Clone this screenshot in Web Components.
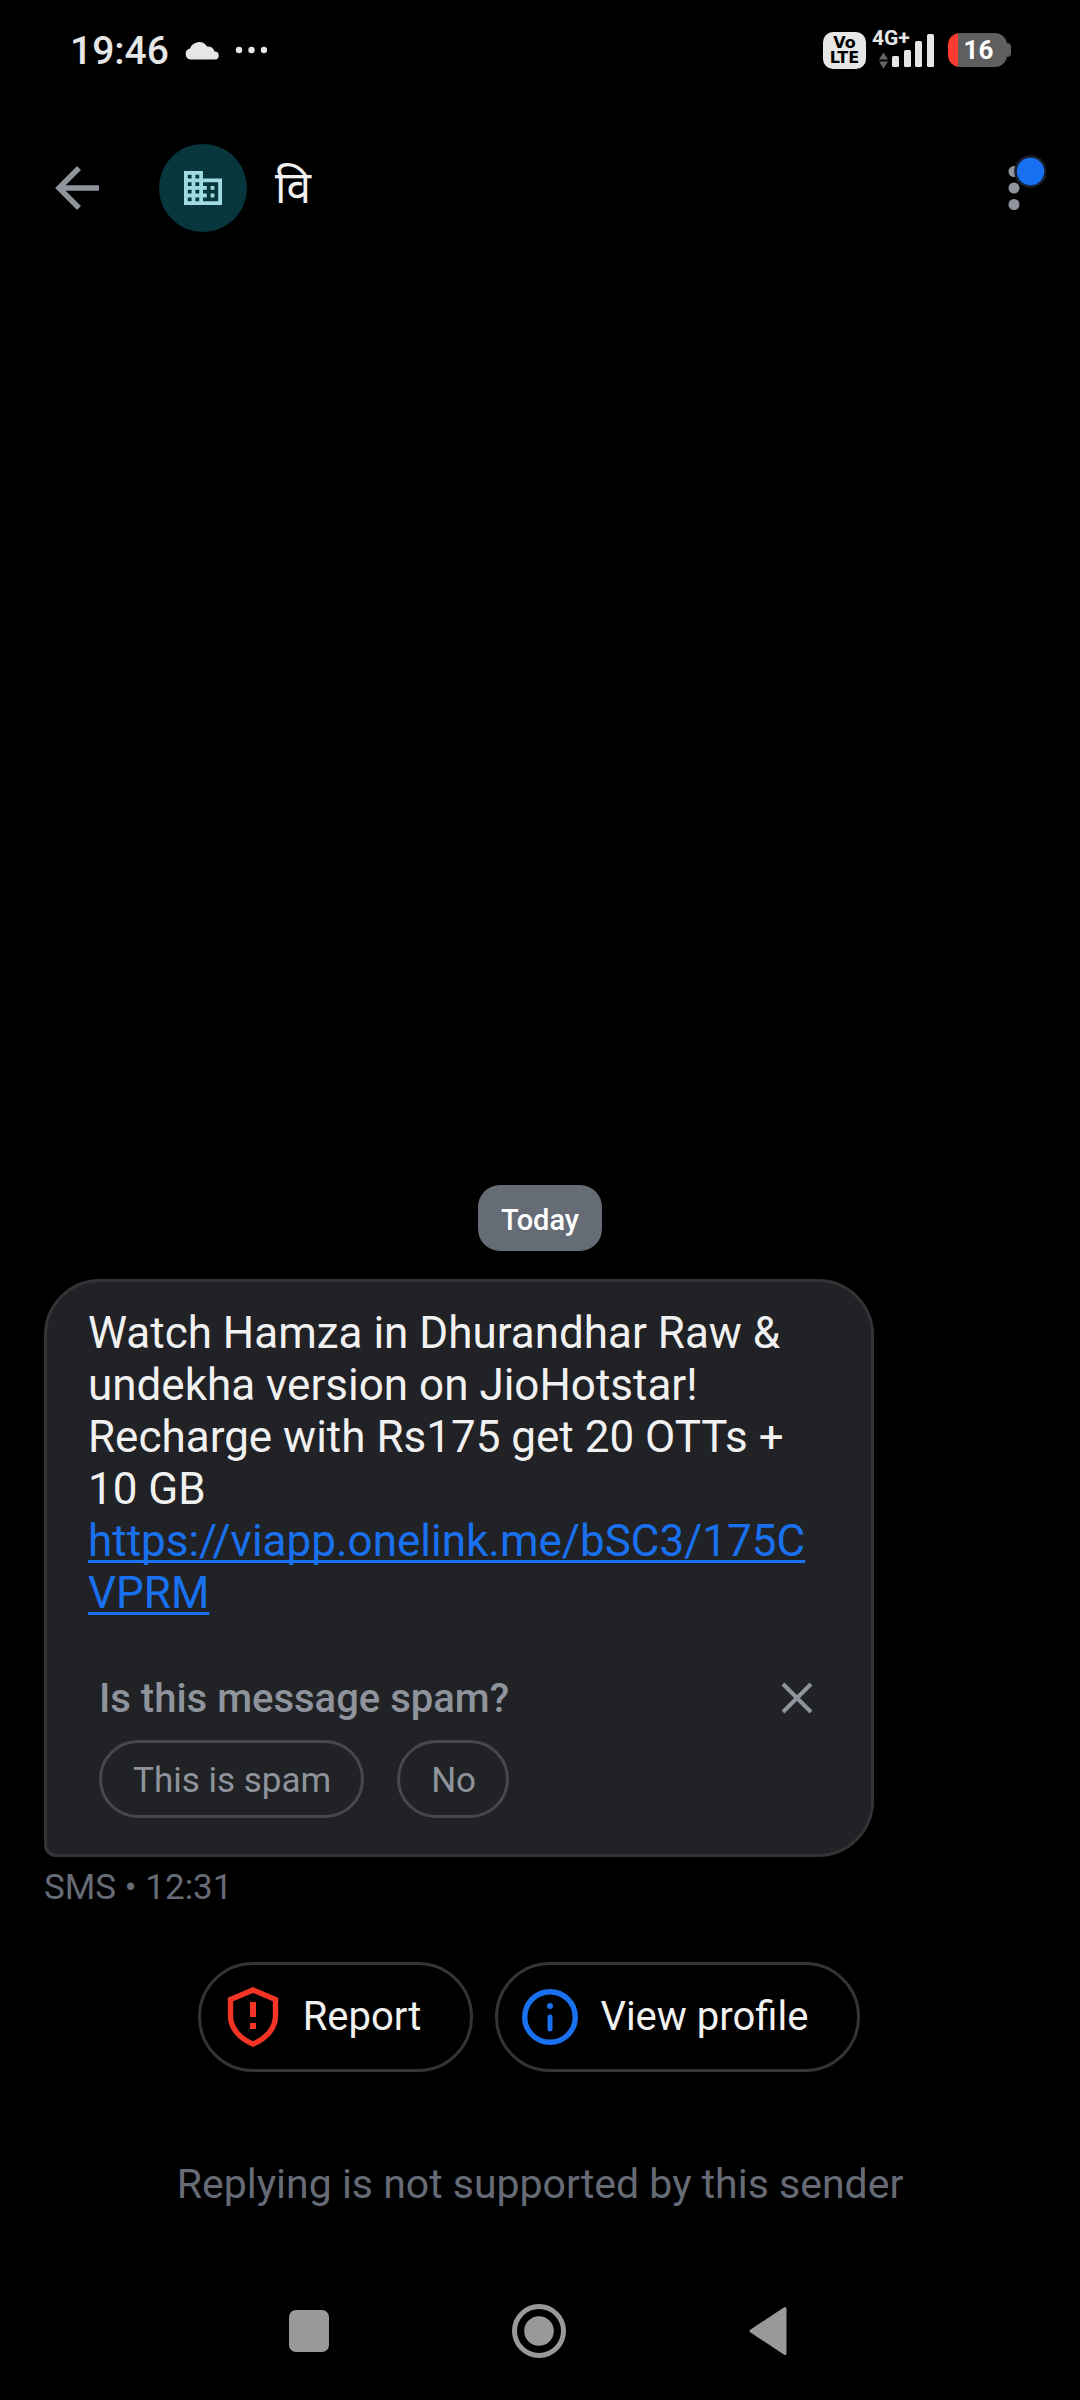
<!DOCTYPE html>
<html lang="en">
<head>
<meta charset="utf-8">
<meta name="viewport" content="width=device-width, initial-scale=1">
<title>Messages</title>
<style>
  html { background: #000; }
  body { margin: 0; background: #000; color: #f1f1f1; font-family: Roboto, "Noto Sans", "Noto Sans Devanagari", sans-serif; }
</style>
</head>
<body>
<messages-screen></messages-screen>

<script>
const reset = `
  * { box-sizing: border-box; }
  svg { display: block; flex: none; }
  button { margin: 0; padding: 0; border: 0; background: none; color: inherit; font: inherit; cursor: pointer; }
`;

function define(name, css, html) {
  const template = document.createElement('template');
  template.innerHTML = `<style>${reset}${css}</style>${html}`;
  customElements.define(name, class extends HTMLElement {
    constructor() {
      super();
      this.attachShadow({ mode: 'open' }).append(template.content.cloneNode(true));
    }
  });
}

/* Clock, notifications, network and battery */
define('status-bar', `
  :host { display: flex; align-items: center; justify-content: space-between; height: 100px; padding: 0 69px 0 70px; color: #e6e6e6; }
  .left, .right { display: flex; align-items: center; }
  .left { gap: 16px; }
  .right { gap: 6px; }
  time { padding-top: 2px; font-size: 39px; line-height: 48px; font-weight: 500; }
  .volte { display: flex; flex-direction: column; justify-content: center; align-items: center; width: 43px; height: 37px; border-radius: 10px; background: #e6e6e6; color: #000; font-family: "DejaVu Sans", sans-serif; font-size: 16px; line-height: 15px; font-weight: 700; }
  .network { display: grid; width: 64px; height: 48px; }
  .network > * { grid-area: 1 / 1; }
  .network span { font-size: 21px; line-height: 24px; font-weight: 700; }
  .battery { display: flex; align-items: center; margin-left: 6px; }
  .cell { display: flex; align-items: center; justify-content: center; width: 59px; height: 34px; padding-left: 2px; border-radius: 12px; background: linear-gradient(90deg, #ff3b30 10px, #5f5f5f 10px); color: #fff; font-size: 26px; line-height: 34px; font-weight: 700; }
  .nub { width: 4px; height: 14px; border-radius: 0 4px 4px 0; background: #5f5f5f; }
`, `
  <div class="left">
    <time>19:46</time>
    <svg width="34" height="20" viewBox="0 0 34 20" fill="#e6e6e6"><path d="M5.500 19.500A5.600 5.600 0 0 1 5 8.500A9.500 9.500 0 0 1 22 6.500 6.500 6.500 0 0 1 29.500 11.500 4 4 0 0 1 30 19.500Z"/></svg>
    <svg width="32" height="8" viewBox="0 0 32 8" fill="#e6e6e6"><circle cx="4" cy="4" r="3.200"/><circle cx="16.500" cy="4" r="3.200"/><circle cx="29" cy="4" r="3.200"/></svg>
  </div>
  <div class="right">
    <div class="volte"><span>Vo</span><span>LTE</span></div>
    <div class="network">
      <svg width="64" height="48" viewBox="0 0 64 48"><g fill="#e6e6e6"><rect x="20" y="30" width="7" height="11" rx="1.500"/><rect x="32" y="24" width="7" height="17" rx="1.500"/><rect x="43" y="15" width="7" height="26" rx="1.500"/><rect x="55" y="8" width="7" height="33" rx="1.500"/></g><path fill="#666" d="M7 33.500 11.500 26.500 16 33.500ZM7 35.500H16L11.500 42.500Z"/></svg>
      <span>4G+</span>
    </div>
    <div class="battery"><div class="cell">16</div><div class="nub"></div></div>
  </div>
`);

define('chat-header', `
  :host { display: flex; align-items: center; height: 175px; padding: 0 34px 0 55px; }
  .avatar { display: grid; place-items: center; width: 88px; height: 88px; margin: 0 28px 0 60px; border-radius: 50%; background: #07363c; }
  h1 { flex: 1; margin: 0; font-size: 44px; line-height: 56px; font-weight: 400; }
`, `
  <button aria-label="Back"><svg width="44" height="44" viewBox="0 0 44 44" fill="none" stroke="#8f949c" stroke-width="5.500"><path d="M44 22H4M24 2 4 22 24 42"/></svg></button>
  <div class="avatar"><svg width="38" height="34" viewBox="0 0 38 34"><path fill="#a0dbe2" fill-rule="evenodd" d="M0 0H19V7.500H38V34H0ZM3.800 3.800V7.500H7.600V3.800ZM11.400 3.800V7.500H15.200V3.800ZM3.800 11.300V15H7.600V11.300ZM11.400 11.300V15H15.200V11.300ZM3.800 18.800V22.500H7.600V18.800ZM11.400 18.800V22.500H15.200V18.800ZM3.800 26.400V30.200H7.600V26.400ZM11.400 26.400V30.200H15.200V26.400ZM19 11.300V15H22.800V18.800H19V22.500H22.800V26.400H19V30.200H34.200V11.300Z"/><path fill="#a0dbe2" d="M26.600 15H30.400V18.800H26.600ZM26.600 22.500H30.400V26.400H26.600Z"/></svg></div>
  <h1 lang="hi">वि</h1>
  <button aria-label="More options"><svg width="38" height="66" viewBox="0 0 38 66"><g fill="#8f949c"><circle cx="6" cy="16.500" r="5.500"/><circle cx="6" cy="33" r="5.500"/><circle cx="6" cy="49.500" r="5.500"/></g><circle cx="22.500" cy="16.500" r="15" fill="#1770f2" stroke="#17202c" stroke-width="2.600"/></svg></button>
`);

define('date-chip', `
  :host { display: block; align-self: center; min-width: 124px; padding: 4px 22px 0; border-radius: 22px; background: #666c76; color: #fff; font-size: 29px; line-height: 62px; font-weight: 500; text-align: center; }
`, `<slot></slot>`);

define('message-bubble', `
  :host { display: block; margin: 28px 206px 0 44px; border: 3px solid #333436; border-radius: 56px 56px 56px 12px; background: #212226; padding: 25px 41px 36px; }
  .text { margin: 0; font-size: 44px; line-height: 52px; overflow-wrap: anywhere; }
`, `<p class="text"><slot></slot></p><slot name="prompt"></slot>`);

define('spam-prompt', `
  :host { display: block; margin-top: 49px; padding: 0 17px 0 11px; color: #8f949c; }
  .row, .actions { display: flex; align-items: center; }
  .row { justify-content: space-between; height: 60px; }
  h2 { margin: 0; padding-top: 2px; font-size: 40px; line-height: 48px; font-weight: 500; }
  .actions { gap: 33px; margin-top: 12px; }
  .actions button { height: 78px; padding: 3px 30px 0 31px; border: 3px solid #47484c; border-radius: 39px; font-size: 35px; line-height: 40px; }
`, `
  <div class="row"><h2>Is this message spam?</h2>
  <button aria-label="Dismiss"><svg width="32" height="32" viewBox="0 0 32 32" fill="none" stroke="#8f949c" stroke-width="4"><path d="M2 2 30 30M30 2 2 30"/></svg></button></div>
  <div class="actions"><button>This is spam</button><button>No</button></div>
`);

define('action-button', `
  :host { display: block; }
  button { display: flex; align-items: center; gap: 20px; height: 110px; padding: 0 49px 0 24px; border: 3px solid #333436; border-radius: 55px; font-size: 40px; line-height: 48px; }
`, `<button><slot name="icon"></slot><slot></slot></button>`);

define('system-nav', `
  :host { display: flex; align-items: center; justify-content: center; gap: 183px; height: 138px; padding-right: 4px; }
`, `
  <button aria-label="Recent apps"><svg width="40" height="54" viewBox="0 0 40 54"><rect y="6" width="40" height="42" rx="7" fill="#999"/></svg></button>
  <button aria-label="Home"><svg width="54" height="54" viewBox="0 0 54 54"><circle cx="27" cy="27" r="24.500" fill="none" stroke="#999" stroke-width="5"/><circle cx="27" cy="27" r="14.800" fill="#999"/></svg></button>
  <button aria-label="Back"><svg width="38" height="54" viewBox="0 0 38 54"><path d="M2 27 36 4.500V49.500Z" fill="#999" stroke="#999" stroke-width="3" stroke-linejoin="round"/></svg></button>
`);

define('messages-screen', `
  :host { display: flex; flex-direction: column; min-height: 100vh; }
  main { flex: 1; display: flex; flex-direction: column; justify-content: flex-end; }
  a { color: #1a71f0; text-decoration: underline; text-decoration-thickness: 3px; text-underline-offset: 4px; text-decoration-skip-ink: none; }
  .meta { margin: 9px 0 0 44px; color: #666b76; font-size: 35px; line-height: 44px; }
  .actions { display: flex; justify-content: center; gap: 22px; margin-top: 52px; padding-right: 22px; }
  .note { margin: 86px 0 52px; text-align: center; color: #666b76; font-size: 41px; line-height: 52px; }
`, `
  <status-bar></status-bar>
  <chat-header></chat-header>
  <main>
    <date-chip>Today</date-chip>
    <message-bubble>Watch Hamza in Dhurandhar Raw &amp; undekha version on JioHotstar! Recharge with Rs175 get 20 OTTs + 10 GB<br><a href="https://viapp.onelink.me/bSC3/175CVPRM">https://viapp.onelink.me/bSC3/175CVPRM</a><spam-prompt slot="prompt"></spam-prompt></message-bubble>
    <p class="meta">SMS • 12:31</p>
    <div class="actions">
      <action-button><svg slot="icon" width="58" height="62" viewBox="0 0 58 62" fill="none"><path d="M28 4 50.500 13.500V30C50.500 42 41 53 28 58 15 53 5.500 42 5.500 30V13.500Z" stroke="#f43425" stroke-width="5.400"/><path d="M28 16V31M28 37V43" stroke="#f43425" stroke-width="6"/></svg>Report</action-button>
      <action-button><svg slot="icon" width="58" height="62" viewBox="0 0 58 62" fill="none"><circle cx="28" cy="31" r="25.300" stroke="#1a71f0" stroke-width="5.400"/><circle cx="28" cy="20" r="3" fill="#1a71f0"/><path d="M28 31V43" stroke="#1a71f0" stroke-width="5" stroke-linecap="round"/></svg>View profile</action-button>
    </div>
  </main>
  <p class="note">Replying is not supported by this sender</p>
  <system-nav></system-nav>
`);
</script>
</body>
</html>
